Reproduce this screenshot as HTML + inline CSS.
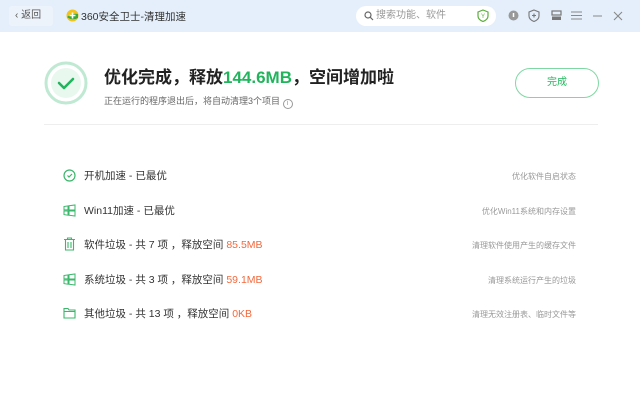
<!DOCTYPE html>
<html><head><meta charset="utf-8"><style>
*{margin:0;padding:0;box-sizing:border-box}
body{width:640px;height:404px;background:#fff;font-family:"Liberation Sans","Noto Sans CJK SC",sans-serif;position:relative;overflow:hidden;color:#333}
.hdr{position:absolute;left:0;top:0;width:640px;height:32px;background:#e4effb}
.abs{position:absolute;white-space:nowrap}
.back{left:9px;top:6px;width:44px;height:20px;background:#edf3fb;border-radius:3px;font-size:10px;color:#555;line-height:20px;padding-left:6px}
.search{left:356px;top:6px;width:140px;height:20px;background:#fff;border-radius:10px;font-size:10px;color:#999;line-height:20px;padding-left:20px}
.row{position:absolute;left:64px;font-size:10.5px;color:#333;white-space:nowrap}
.row span.o{color:#f4683c}
.desc{position:absolute;right:64px;font-size:8px;color:#999;white-space:nowrap}
.ic{position:absolute;left:-1px}
</style></head><body>
<div class="hdr"></div>
<div class="abs back">‹ 返回</div>
<svg class="abs" style="left:66px;top:9px" width="13" height="13"><circle cx="6.5" cy="6.5" r="6" fill="#f3c21b"/><path d="M1 8 Q6 4 12 5 L12 9 Q6 12 1 8Z" fill="#3aa83a"/><path d="M6.5 3.5v6M3.5 6.5h6" stroke="#fff" stroke-width="1.6"/></svg>
<div class="abs" style="left:81px;top:9px;font-size:10.5px;color:#333">360安全卫士-清理加速</div>
<div class="abs search">搜索功能、软件</div>
<svg class="abs" style="left:364px;top:11px" width="10" height="10"><circle cx="4" cy="4" r="3" fill="none" stroke="#666" stroke-width="1.2"/><path d="M6.2 6.2L9 9" stroke="#666" stroke-width="1.2"/></svg>
<svg class="abs" style="left:477px;top:9px" width="12" height="13"><path d="M6 1L11 3v4c0 3-2.5 4.5-5 5.5C3.5 11.5 1 10 1 7V3z" fill="#fff" stroke="#5aae3c" stroke-width="1.2"/><text x="6" y="9" font-size="6" text-anchor="middle" fill="#5aae3c">Y</text></svg>
<svg class="abs" style="left:508px;top:10px" width="11" height="11"><circle cx="5.5" cy="5.5" r="5" fill="#999"/><path d="M5.5 3v4" stroke="#fff" stroke-width="1.5"/></svg>
<svg class="abs" style="left:528px;top:9px" width="12" height="13"><path d="M6 1L11 3v4c0 3-2.5 4.5-5 5.5C3.5 11.5 1 10 1 7V3z" fill="none" stroke="#777" stroke-width="1.1"/><path d="M6 4.5v4M4 6.5h4" stroke="#777" stroke-width="1.1"/></svg>
<svg class="abs" style="left:551px;top:10px" width="11" height="11"><rect x="1" y="1" width="9" height="4" fill="none" stroke="#777" stroke-width="1.2"/><rect x="1" y="6.5" width="9" height="3.5" fill="#777"/></svg>
<svg class="abs" style="left:571px;top:11px" width="11" height="9"><path d="M0 1h11M0 4.5h11M0 8h11" stroke="#888" stroke-width="1"/></svg>
<svg class="abs" style="left:593px;top:15px" width="9" height="2"><path d="M0 1h9" stroke="#888"/></svg>
<svg class="abs" style="left:613px;top:11px" width="10" height="10"><path d="M1 1l8 8M9 1l-8 8" stroke="#888" stroke-width="1.1"/></svg>

<svg class="abs" style="left:44px;top:61px" width="44" height="44"><circle cx="22" cy="22" r="20" fill="#fff" stroke="#bfe9d2" stroke-width="3"/><circle cx="22" cy="22" r="15" fill="#e9f8ef"/><path d="M15 22l5 5 9-9" fill="none" stroke="#22b45d" stroke-width="2.6" stroke-linecap="round" stroke-linejoin="round"/></svg>
<div class="abs" style="left:104px;top:63px;font-size:17px;font-weight:bold;color:#222">优化完成，释放<span style="color:#22b45d">144.6MB</span>，空间增加啦</div>
<div class="abs" style="left:104px;top:94px;font-size:9px;color:#666">正在运行的程序退出后，将自动清理3个项目 <span style="display:inline-block;width:10px;height:10px;border:1px solid #999;border-radius:50%;font-size:7px;text-align:center;line-height:8px;color:#999;vertical-align:-1px">i</span></div>
<div class="abs" style="left:515px;top:68px;width:84px;height:30px;border:1.5px solid #7fd8a3;border-radius:15px;text-align:center;line-height:27px;font-size:10px;color:#22b45d">完成</div>
<div class="abs" style="left:44px;top:124px;width:554px;height:1px;background:#eee"></div>

<div class="row" style="top:168px"><svg class="ic" style="left:-1px;top:1px" width="13" height="13"><circle cx="6.5" cy="6.5" r="5.5" fill="none" stroke="#3ab76a" stroke-width="1.2"/><path d="M4.5 6.5l1.5 1.5 3-3" fill="none" stroke="#3ab76a" stroke-width="1.2"/></svg><span style="margin-left:20px">开机加速 - 已最优</span></div>
<div class="row" style="top:203px"><svg class="ic" style="top:1px" width="13" height="13"><path d="M1 2.5l4-.6v4H1zM6 1.8l6-.8v5H6zM1 7h4v4.2l-4-.6zM6 7h6v5l-6-.8z" fill="none" stroke="#3ab76a" stroke-width="1"/></svg><span style="margin-left:20px">Win11加速 - 已最优</span></div>
<div class="row" style="top:237px"><svg class="ic" style="top:0px" width="13" height="14"><path d="M1 2.5h11M4.5 2.5V1h4v1.5M2.5 2.5v10.5h8V2.5M5 5v6M8 5v6" fill="none" stroke="#3ab76a" stroke-width="1.1"/></svg><span style="margin-left:20px">软件垃圾 - 共 7 项 ，释放空间 <span class="o">85.5MB</span></span></div>
<div class="row" style="top:272px"><svg class="ic" style="top:1px" width="13" height="13"><path d="M1 2.5l4-.6v4H1zM6 1.8l6-.8v5H6zM1 7h4v4.2l-4-.6zM6 7h6v5l-6-.8z" fill="none" stroke="#3ab76a" stroke-width="1"/></svg><span style="margin-left:20px">系统垃圾 - 共 3 项 ，释放空间 <span class="o">59.1MB</span></span></div>
<div class="row" style="top:306px"><svg class="ic" style="top:1px" width="13" height="12"><path d="M1 1.5h4l1 1.5h6v8H1zM1 4.5h11" fill="none" stroke="#3ab76a" stroke-width="1.1"/></svg><span style="margin-left:20px">其他垃圾 - 共 13 项 ，释放空间 <span class="o">0KB</span></span></div>

<div class="desc" style="top:171px">优化软件自启状态</div>
<div class="desc" style="top:206px">优化Win11系统和内存设置</div>
<div class="desc" style="top:240px">清理软件使用产生的缓存文件</div>
<div class="desc" style="top:275px">清理系统运行产生的垃圾</div>
<div class="desc" style="top:309px">清理无效注册表、临时文件等</div>
</body></html>
